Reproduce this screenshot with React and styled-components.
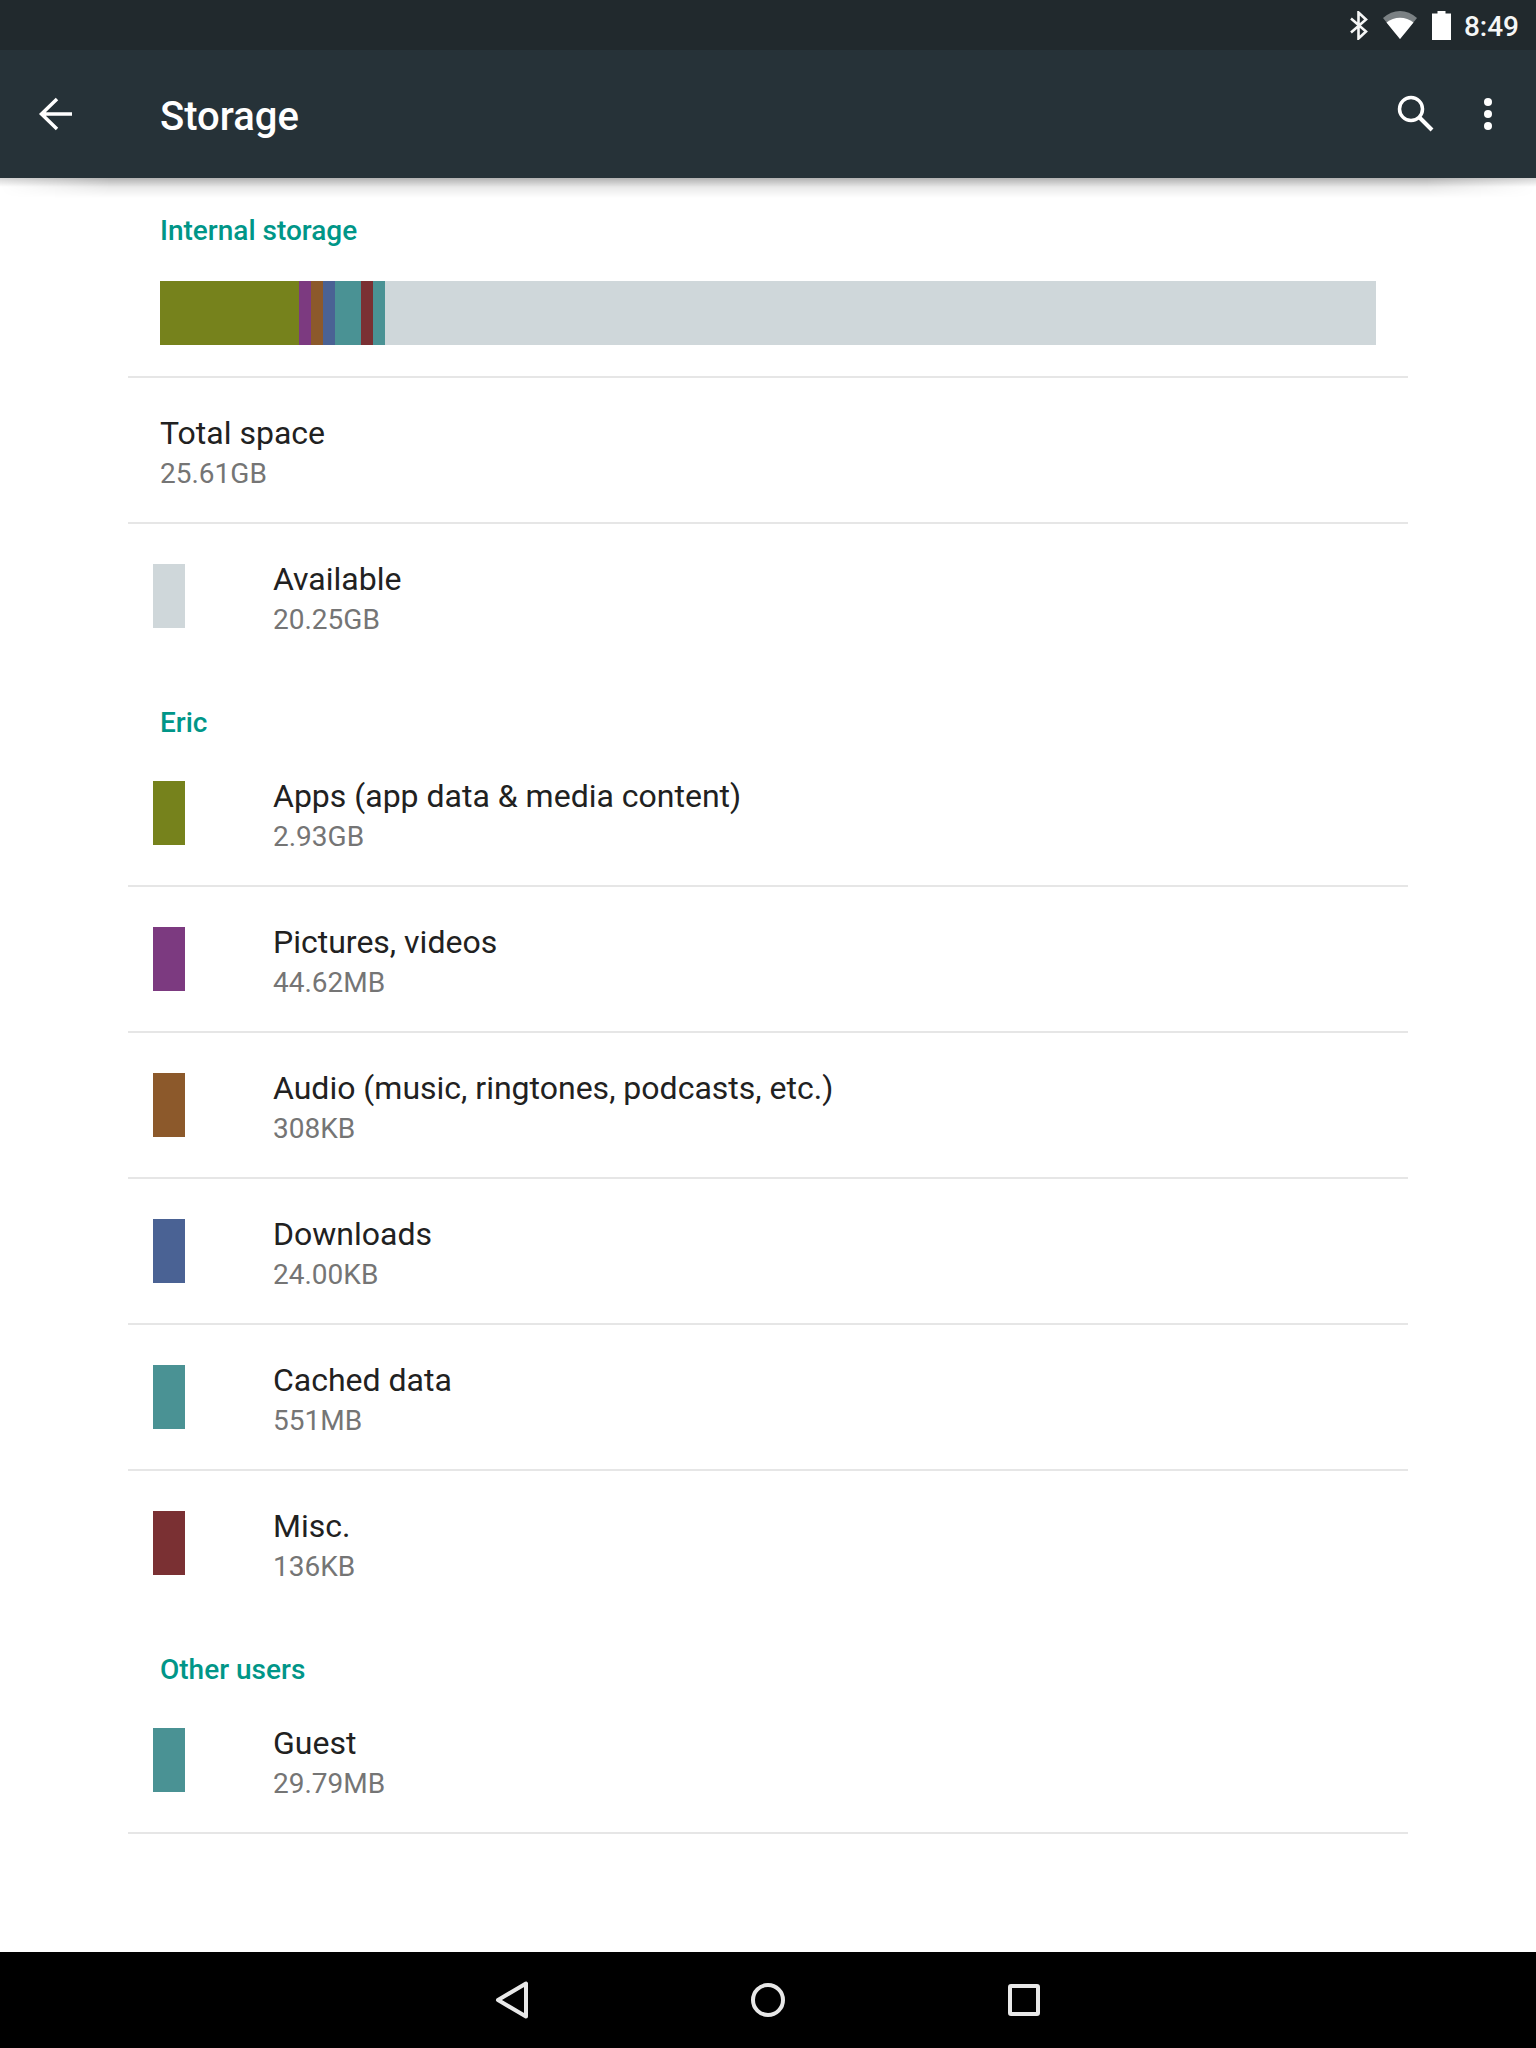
// Android storage settings screen

import styled, { createGlobalStyle } from "styled-components";

const GlobalStyle = createGlobalStyle`
  html, body {
    margin: 0;
    padding: 0;
    background: #fff;
  }
  body {
    font-family: Roboto, "Noto Sans", sans-serif;
    -webkit-font-smoothing: antialiased;
  }
`;

const Screen = styled.div`
  width: 1536px;
  height: 2048px;
  display: flex;
  flex-direction: column;
  overflow: hidden;
  background: #fff;
`;

const StatusBar = styled.div`
  height: 50px;
  flex: none;
  background: #21292d;
  display: flex;
  align-items: center;
  justify-content: flex-end;
  padding-right: 17px;
  color: #fff;
`;

const StatusIcon = styled.svg`
  display: block;
  margin-right: ${(props) => props.$gap}px;
`;

const Clock = styled.span`
  margin-top: 4px;
  font-size: 28px;
  font-weight: 500;
  line-height: 46px;
  color: #f5f6f6;
`;

const Toolbar = styled.header`
  height: 128px;
  flex: none;
  position: relative;
  z-index: 2;
  background: #263238;
  display: flex;
  align-items: center;
  color: #fff;

  /* shadow: short strip across the full width, deeper part fades out at both ends */
  &::before {
    content: "";
    position: absolute;
    left: 0;
    right: 0;
    top: 100%;
    height: 9px;
    background: linear-gradient(to bottom, rgba(0, 0, 0, 0.17), transparent);
  }

  &::after {
    content: "";
    position: absolute;
    left: 0;
    right: 0;
    top: 100%;
    height: 20px;
    background: linear-gradient(to bottom, rgba(0, 0, 0, 0.16), transparent);
    -webkit-mask-image: linear-gradient(to right, transparent 0, #000 110px, #000 1426px, transparent 100%);
    mask-image: linear-gradient(to right, transparent 0, #000 110px, #000 1426px, transparent 100%);
  }
`;

const BackButton = styled.svg`
  display: block;
  flex: none;
  margin-left: 38px;
  margin-right: 86px;
`;

const Title = styled.h1`
  flex: 1;
  margin: 5px 0 0;
  font-size: 40px;
  font-weight: 500;
  line-height: 48px;
  color: #fff;
`;

const ActionIcon = styled.svg`
  display: block;
  flex: none;
  margin-right: ${(props) => props.$gap}px;
  margin-bottom: ${(props) => props.$lift || 0}px;
`;

const Content = styled.main`
  flex: 1;
  width: 1280px;
  margin: 0 auto;
`;

const SectionHeader = styled.h2`
  margin: 0;
  padding: ${(props) => (props.$first ? "34px 32px 0" : "37px 32px 0")};
  font-size: 28px;
  font-weight: 500;
  line-height: ${(props) => (props.$first ? 38 : 36)}px;
  color: #009688;
`;

const BarWrap = styled.div`
  padding: 31px 32px;
  border-bottom: 2px solid #e6e6e6;
`;

const UsageBar = styled.div`
  display: flex;
  height: 64px;
  background: #cfd7da;
`;

const Segment = styled.div`
  flex: none;
  width: ${(props) => props.$w}px;
  background: ${(props) => props.$color};
`;

const Row = styled.div`
  height: 144px;
  display: flex;
  align-items: center;
  padding-left: ${(props) => (props.$plain ? 32 : 25)}px;
  border-bottom: ${(props) => (props.$last ? "none" : "2px solid #e6e6e6")};
`;

const Swatch = styled.div`
  flex: none;
  width: 32px;
  height: 64px;
  margin-right: 88px;
  background: ${(props) => props.$color};
`;

const RowText = styled.div`
  display: flex;
  flex-direction: column;
  padding-top: 6px;
`;

const RowTitle = styled.div`
  font-size: 32px;
  line-height: 42px;
  color: #212121;
`;

const RowValue = styled.div`
  font-size: 28px;
  line-height: 40px;
  color: #757575;
`;

const NavBar = styled.nav`
  height: 96px;
  flex: none;
  background: #000;
  display: flex;
  align-items: center;
  justify-content: center;
  gap: 192px;
`;

const NavIcon = styled.svg`
  display: block;
  fill: none;
  stroke: #e8e8e8;
  stroke-width: 4;
  stroke-linejoin: round;
`;

const COLORS = {
  apps: "#76821c",
  pictures: "#7c3a80",
  audio: "#8c592b",
  downloads: "#4a6294",
  cached: "#4a9294",
  misc: "#7a3033",
  free: "#cfd7da",
};

const SEGMENTS = [
  { w: 139, color: COLORS.apps },
  { w: 12, color: COLORS.pictures },
  { w: 12, color: COLORS.audio },
  { w: 12, color: COLORS.downloads },
  { w: 26, color: COLORS.cached },
  { w: 12, color: COLORS.misc },
  { w: 12, color: COLORS.cached },
];

const ERIC_ROWS = [
  { title: "Apps (app data & media content)", value: "2.93GB", color: COLORS.apps },
  { title: "Pictures, videos", value: "44.62MB", color: COLORS.pictures },
  { title: "Audio (music, ringtones, podcasts, etc.)", value: "308KB", color: COLORS.audio },
  { title: "Downloads", value: "24.00KB", color: COLORS.downloads },
  { title: "Cached data", value: "551MB", color: COLORS.cached },
  { title: "Misc.", value: "136KB", color: COLORS.misc, last: true },
];

const StorageRow = ({ title, value, color, last }) => (
  <Row $last={last} $plain={!color}>
    {color && <Swatch $color={color} />}
    <RowText>
      <RowTitle>{title}</RowTitle>
      <RowValue>{value}</RowValue>
    </RowText>
  </Row>
);

const App = () => {
  return (
    <Screen>
      <GlobalStyle />
      <StatusBar>
        <StatusIcon $gap={15} width="18" height="29" viewBox="0 0 18 29">
          <path d="M1 7.5 L16 20.5 L8.5 27.5 V1.5 L16 8.5 L1 21.5" fill="none" stroke="#f5f6f6" strokeWidth="2.6" />
        </StatusIcon>
        <StatusIcon $gap={15} width="34" height="28" viewBox="0 0 34 28">
          <path d="M17 28 L0 7 C10 -2.300 24 -2.300 34 7 Z" fill="#7b8184" />
          <path d="M17 28 L3.500 11.500 C11 5 23 5 30.500 11.500 Z" fill="#fff" />
        </StatusIcon>
        <StatusIcon $gap={13} width="19" height="29" viewBox="0 0 19 29">
          <path d="M5.500 0 H13.500 V2.500 H19 V29 H0 V2.500 H5.500 Z" fill="#fff" />
        </StatusIcon>
        <Clock>8:49</Clock>
      </StatusBar>

      <Toolbar>
        <BackButton width="36" height="36" viewBox="0 0 36 36">
          <path d="M34 18 H4 M19 3 L3.500 18 L19 33" fill="none" stroke="#fff" strokeWidth="3.500" />
        </BackButton>
        <Title>Storage</Title>
        <ActionIcon $gap={50} $lift={2} width="38" height="38" viewBox="0 0 38 38">
          <circle cx="15" cy="15" r="11.500" fill="none" stroke="#fff" strokeWidth="3.500" />
          <path d="M23.500 23.500 L36 36" stroke="#fff" strokeWidth="4" />
        </ActionIcon>
        <ActionIcon $gap={44} width="8" height="32" viewBox="0 0 8 32">
          <circle cx="4" cy="4" r="4" fill="#fff" />
          <circle cx="4" cy="16" r="4" fill="#fff" />
          <circle cx="4" cy="28" r="4" fill="#fff" />
        </ActionIcon>
      </Toolbar>

      <Content>
        <SectionHeader $first>Internal storage</SectionHeader>
        <BarWrap>
          <UsageBar>
            {SEGMENTS.map((seg, i) => (
              <Segment key={i} $w={seg.w} $color={seg.color} />
            ))}
          </UsageBar>
        </BarWrap>
        <StorageRow title="Total space" value="25.61GB" />
        <StorageRow title="Available" value="20.25GB" color={COLORS.free} last />

        <SectionHeader>Eric</SectionHeader>
        {ERIC_ROWS.map((row) => (
          <StorageRow key={row.title} {...row} />
        ))}

        <SectionHeader>Other users</SectionHeader>
        <StorageRow title="Guest" value="29.79MB" color={COLORS.cached} />
      </Content>

      <NavBar>
        <NavIcon width="64" height="64" viewBox="0 0 64 64">
          <path d="M18 32 L46 15.500 V48.500 Z" />
        </NavIcon>
        <NavIcon width="64" height="64" viewBox="0 0 64 64">
          <circle cx="32" cy="32" r="15" />
        </NavIcon>
        <NavIcon width="64" height="64" viewBox="0 0 64 64">
          <rect x="18" y="18" width="28" height="28" rx="1" />
        </NavIcon>
      </NavBar>
    </Screen>
  );
};

export default App;
